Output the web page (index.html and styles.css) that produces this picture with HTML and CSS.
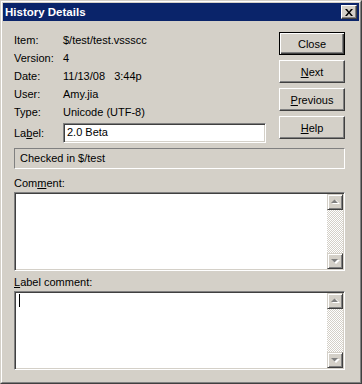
FILE: index.html
```html
<!DOCTYPE html>
<html lang="en">
<head>
  <meta charset="UTF-8">
  <title>History Details</title>
  <link rel="stylesheet" href="styles.css">
</head>
<body>

  <div class="window">
    <div class="frame">

      <!-- Title bar -->
      <div class="titlebar">
        <span class="title">History Details</span>
        <button class="title-close">
          <svg width="8" height="7" viewBox="0 0 8 7">
            <path d="M0 0h2l2 2.5 2-2.5h2l-3 3.5 3 3.5h-2l-2-2.5-2 2.5h-2l3-3.5z" fill="#000"/>
          </svg>
        </button>
      </div>

      <div class="content">
        <div class="top">
          <div class="info">
            <span>Item:</span><span>$/test/test.vssscc</span>
            <span>Version:</span><span>4</span>
            <span>Date:</span><span class="pre">11/13/08   3:44p</span>
            <span>User:</span><span>Amy.jia</span>
            <span>Type:</span><span>Unicode (UTF-8)</span>
            <span class="label-cell">La<u>b</u>el:</span>
            <div class="field">2.0 Beta</div>
          </div>

          <div class="buttons">
            <button class="btn default">Close</button>
            <button class="btn"><u>N</u>ext</button>
            <button class="btn"><u>P</u>revious</button>
            <button class="btn"><u>H</u>elp</button>
          </div>
        </div>

        <div class="status">Checked in $/test</div>

        <div class="caption">Com<u>m</u>ent:</div>
        <div class="memo">
          <div class="memo-text"></div>
          <div class="scroll">
            <div class="sbtn">
              <svg width="9" height="6" viewBox="0 0 9 6"><path d="M1 5h8l-4-4z" fill="#fff"/><path d="M0 4h7l-3.5-3.5z" fill="#808080"/></svg>
            </div>
            <div class="track"></div>
            <div class="sbtn">
              <svg width="9" height="6" viewBox="0 0 9 6"><path d="M1 2h8l-4 4z" fill="#fff"/><path d="M0 1h7l-3.5 3.5z" fill="#808080"/></svg>
            </div>
          </div>
        </div>

        <div class="caption second"><u>L</u>abel comment:</div>
        <div class="memo">
          <div class="memo-text"><span class="caret"></span></div>
          <div class="scroll">
            <div class="sbtn">
              <svg width="9" height="6" viewBox="0 0 9 6"><path d="M1 5h8l-4-4z" fill="#fff"/><path d="M0 4h7l-3.5-3.5z" fill="#808080"/></svg>
            </div>
            <div class="track"></div>
            <div class="sbtn">
              <svg width="9" height="6" viewBox="0 0 9 6"><path d="M1 2h8l-4 4z" fill="#fff"/><path d="M0 1h7l-3.5 3.5z" fill="#808080"/></svg>
            </div>
          </div>
        </div>
      </div>

    </div>
  </div>

</body>
</html>
```

FILE: styles.css
```css
* { box-sizing: border-box; }
body {
  margin: 0;
  font-family: 'Liberation Sans', Arial, sans-serif;
  font-size: 11px;
  color: #000;
  background: #d4d0c8;
}

.window {
  height: 384px;
  display: flex;
  border: 1px solid;
  border-color: #d4d0c8 #404040 #404040 #d4d0c8;
}

.frame {
  flex: 1;
  display: flex;
  flex-direction: column;
  padding: 1px;
  border: 1px solid;
  border-color: #fff #808080 #808080 #fff;
}

.titlebar {
  height: 18px;
  display: flex;
  align-items: center;
  justify-content: space-between;
  padding: 0 2px;
  background: #0a246a;
}

.title {
  color: #fff;
  font-weight: bold;
  font-size: 11.5px;
}

.title-close {
  width: 16px;
  height: 14px;
  padding: 0;
  display: flex;
  align-items: center;
  justify-content: center;
  background: #d4d0c8;
  border: 1px solid;
  border-color: #fff #404040 #404040 #fff;
  box-shadow: inset -1px -1px #808080;
}

.content {
  flex: 1;
  display: flex;
  flex-direction: column;
  padding: 10px 14px 0 11px;
}

.top {
  display: flex;
  gap: 13px;
}

.info {
  display: grid;
  grid-template-columns: 49px 203px;
  grid-template-rows: repeat(5, 18px) 22px;
  line-height: 18px;
}

.pre { white-space: pre; }

.label-cell {
  align-self: end;
  line-height: 20px;
}

.field {
  align-self: end;
  height: 20px;
  padding-left: 3px;
  line-height: 16px;
  background: #fff;
  border: 1px solid;
  border-color: #808080 #fff #fff #808080;
  box-shadow: inset 1px 1px #404040, inset -1px -1px #d4d0c8;
}

.buttons {
  width: 66px;
  display: flex;
  flex-direction: column;
  gap: 5px;
  margin-top: 1px;
}

.btn {
  height: 23px;
  padding: 0;
  font-family: inherit;
  font-size: 11px;
  color: #000;
  background: #d4d0c8;
  border: 1px solid;
  border-color: #fff #404040 #404040 #fff;
  box-shadow: inset -1px -1px #808080;
}

.btn.default {
  border-color: #000;
  box-shadow: inset 1px 1px #fff, inset -1px -1px #404040, inset -2px -2px #808080;
}

.status {
  margin-top: 5px;
  height: 21px;
  padding-left: 5px;
  line-height: 19px;
  border: 1px solid;
  border-color: #808080 #fff #fff #808080;
}

.caption {
  margin: 7px 0 2px;
  line-height: 14px;
}

.caption.second { margin-top: 4px; }

.memo {
  height: 79px;
  display: flex;
  background: #fff;
  border: 1px solid;
  border-color: #808080 #fff #fff #808080;
  box-shadow: inset 1px 1px #404040, inset -1px -1px #d4d0c8;
  padding: 1px;
}

.memo-text {
  flex: 1;
  padding: 1px 3px;
}

.caret {
  display: block;
  width: 1px;
  height: 13px;
  background: #000;
}

.scroll {
  width: 16px;
  display: flex;
  flex-direction: column;
  background: repeating-conic-gradient(#fff 0 25%, #d4d0c8 0 50%) 0 0 / 2px 2px;
}

.sbtn {
  height: 16px;
  display: flex;
  align-items: center;
  justify-content: center;
  background: #d4d0c8;
  border: 1px solid;
  border-color: #d4d0c8 #404040 #404040 #d4d0c8;
  box-shadow: inset 1px 1px #fff, inset -1px -1px #808080;
}

.track { flex: 1; }
```
